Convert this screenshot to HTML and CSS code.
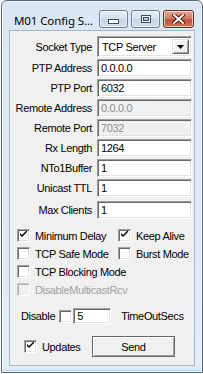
FILE: index.html
```html
<!DOCTYPE html>
<html>
<head>
<meta charset="utf-8">
<link rel="stylesheet" href="styles.css">
</head>
<body>
<div class="window">
  <div class="titlebar">
    <span class="title">M01 Config S...</span>
    <div class="caption-buttons">
      <div class="cbtn cbtn-min"><svg width="11" height="5" viewBox="0 0 11 5"><rect x="0.5" y="0.5" width="10" height="4" fill="#fff" stroke="#3b4a5e"/></svg></div>
      <div class="cbtn cbtn-max"><svg width="10" height="8" viewBox="0 0 10 8"><rect x="0.5" y="0.5" width="9" height="7" fill="#fff" stroke="#3b4a5e"/><rect x="2.5" y="2.5" width="5" height="3" fill="#b9c8da" stroke="#3b4a5e"/></svg></div>
      <div class="cbtn cbtn-close"><svg width="13" height="10" viewBox="0 0 13 10"><path d="M2 1 L11 9 M11 1 L2 9" stroke="#5a1a14" stroke-width="4" stroke-linecap="square"/><path d="M2 1 L11 9 M11 1 L2 9" stroke="#fff" stroke-width="2" stroke-linecap="square"/></svg></div>
    </div>
  </div>
  <div class="client">
    <div class="form">
      <label class="lbl">Socket Type</label>
      <div class="combo"><span>TCP Server</span><div class="combo-btn"><svg width="7" height="4" viewBox="0 0 7 4"><path d="M0 0 H7 L3.5 4 Z" fill="#000"/></svg></div></div>
      <label class="lbl">PTP Address</label>
      <div class="edit">0.0.0.0</div>
      <label class="lbl">PTP Port</label>
      <div class="edit">6032</div>
      <label class="lbl">Remote Address</label>
      <div class="edit disabled">0.0.0.0</div>
      <label class="lbl">Remote Port</label>
      <div class="edit disabled">7032</div>
      <label class="lbl">Rx Length</label>
      <div class="edit">1264</div>
      <label class="lbl">NTo1Buffer</label>
      <div class="edit">1</div>
      <label class="lbl">Unicast TTL</label>
      <div class="edit">1</div>
      <label class="lbl lbl-last">Max Clients</label>
      <div class="edit edit-last">1</div>
    </div>
    <div class="checks">
      <div class="chk"><span class="box checked"></span>Minimum Delay</div>
      <div class="chk"><span class="box checked"></span>Keep Alive</div>
      <div class="chk"><span class="box"></span>TCP Safe Mode</div>
      <div class="chk"><span class="box"></span>Burst Mode</div>
      <div class="chk wide"><span class="box"></span>TCP Blocking Mode</div>
      <div class="chk wide dis"><span class="box"></span>DisableMulticastRcv</div>
    </div>
    <div class="timeout">
      <span class="t-lbl">Disable</span>
      <span class="box"></span>
      <div class="edit small">5</div>
      <span class="t-secs">TimeOutSecs</span>
    </div>
    <div class="bottom">
      <div class="chk"><span class="box checked"></span>Updates</div>
      <div class="button">Send</div>
    </div>
  </div>
</div>
</body>
</html>
```
FILE: styles.css
```css
html, body {
  margin: 0;
  padding: 0;
  background: #ffffff;
}
body {
  width: 203px;
  height: 374px;
  overflow: hidden;
  font-family: "Liberation Sans", Arial, sans-serif;
  font-size: 11px;
  letter-spacing: -0.35px;
  color: #000;
}
.window {
  box-sizing: border-box;
  width: 202px;
  height: 373px;
  margin-left: 1px;
  border: 1px solid #55657a;
  border-radius: 6px 6px 0 0;
  background: linear-gradient(#d9e5f3, #dde8f5 40px, #e3ecf7);
  box-shadow: inset 0 0 0 1px #f4f8fc, inset 0 -2px 0 #a9d9ee;
  display: flex;
  flex-direction: column;
  padding: 0 7px 6px 7px;
}
.titlebar {
  height: 29px;
  display: flex;
  align-items: flex-start;
  justify-content: space-between;
  flex: none;
}
.title {
  font-family: "Noto Sans", "Open Sans", sans-serif;
  font-size: 11.5px;
  letter-spacing: -0.1px;
  margin-top: 12px;
  margin-left: 5px;
  color: #000;
}
.caption-buttons {
  display: flex;
  gap: 3px;
  margin-top: 9px;
  margin-right: 1px;
}
.cbtn {
  box-sizing: border-box;
  height: 18px;
  width: 29px;
  border: 1px solid #6d7d92;
  border-radius: 3px;
  display: flex;
  align-items: center;
  justify-content: center;
  background: linear-gradient(#e8eef6, #d3dfec 50%, #c4d3e5 51%, #d4e0ee);
  box-shadow: inset 0 0 0 1px rgba(255,255,255,0.6);
}
.cbtn-min svg { margin-top: 5px; }
.cbtn-close {
  width: 31px;
  border-color: #6b2a22;
  background: linear-gradient(#e4a594, #d47763 50%, #c5503c 51%, #d0735a);
}
.client {
  flex: 1;
  background: #f0f0f0;
  border: 1px solid #a4b5ca;
  padding: 5px 1px 0 7px;
  display: flex;
  flex-direction: column;
}
.form {
  display: grid;
  grid-template-columns: 75px 95px;
  column-gap: 5px;
  row-gap: 2px;
  align-items: center;
}
.lbl {
  display: flex;
  justify-content: flex-end;
  white-space: nowrap;
}
.lbl-last, .edit-last { margin-top: 2px; }
.edit {
  box-sizing: border-box;
  height: 18px;
  background: #fff;
  border-style: solid;
  border-width: 1px;
  border-color: #a0a0a0 #fff #fff #a0a0a0;
  box-shadow: inset 1px 1px 0 #696969, inset -1px -1px 0 #e3e3e3;
  padding: 1px 0 0 3px;
  line-height: 14px;
  white-space: nowrap;
}
.edit.disabled {
  background: #f0f0f0;
  color: #8d8d8d;
}
.combo {
  box-sizing: border-box;
  height: 21px;
  background: #fff;
  border-style: solid;
  border-width: 1px;
  border-color: #a0a0a0 #fff #fff #a0a0a0;
  box-shadow: inset 1px 1px 0 #696969, inset -1px -1px 0 #e3e3e3;
  display: flex;
  align-items: center;
  justify-content: space-between;
  padding: 0 2px 0 4px;
}
.combo-btn {
  box-sizing: border-box;
  width: 17px;
  height: 15px;
  background: #f0f0f0;
  border-style: solid;
  border-width: 1px;
  border-color: #e3e3e3 #696969 #696969 #e3e3e3;
  box-shadow: inset 1px 1px 0 #fff, inset -1px -1px 0 #a0a0a0;
  display: flex;
  align-items: center;
  justify-content: center;
}
.box {
  box-sizing: border-box;
  width: 13px;
  height: 13px;
  flex: none;
  background: #fff;
  border-style: solid;
  border-width: 1px;
  border-color: #a0a0a0 #fff #fff #a0a0a0;
  box-shadow: inset 1px 1px 0 #696969, inset -1px -1px 0 #e3e3e3;
  position: relative;
}
.box.checked::after {
  content: "";
  position: absolute;
  left: 2px;
  top: 1px;
  width: 7px;
  height: 7px;
  background: no-repeat center / 7px 7px url("data:image/svg+xml,%3Csvg xmlns='http://www.w3.org/2000/svg' width='7' height='7' viewBox='0 0 7 7'%3E%3Cpath d='M0 2 L0 4 L2 6 L7 1 L7 -1 L2 4 Z' fill='%23000'/%3E%3C/svg%3E");
}
.checks {
  margin-top: 10px;
  display: grid;
  grid-template-columns: 101px 1fr;
  row-gap: 5px;
}
.chk {
  display: flex;
  align-items: center;
  gap: 5px;
  height: 13px;
  white-space: nowrap;
}
.chk.wide { grid-column: 1 / span 2; }
.chk.dis { color: #a0a0a0; }
.chk.dis .box {
  background: #f0f0f0;
  border-color: #c8c8c8 #fff #fff #c8c8c8;
  box-shadow: inset 1px 1px 0 #b0b0b0, inset -1px -1px 0 #f0f0f0;
}
.timeout {
  margin-top: 12px;
  display: flex;
  align-items: center;
  padding-left: 4px;
}
.t-lbl { margin-right: 4px; }
.timeout .box { margin-right: 1px; }
.edit.small {
  width: 38px;
  height: 16px;
  line-height: 13px;
}
.t-secs { margin-left: 10px; }
.bottom {
  margin-top: 12px;
  display: flex;
  align-items: center;
  padding-left: 7px;
}
.bottom .chk { width: 68px; }
.button {
  box-sizing: border-box;
  width: 83px;
  height: 21px;
  background: #f0f0f0;
  border: 1px solid #696969;
  box-shadow: inset 1px 1px 0 #fff, inset -1px -1px 0 #a0a0a0;
  display: flex;
  align-items: center;
  justify-content: center;
}
```
